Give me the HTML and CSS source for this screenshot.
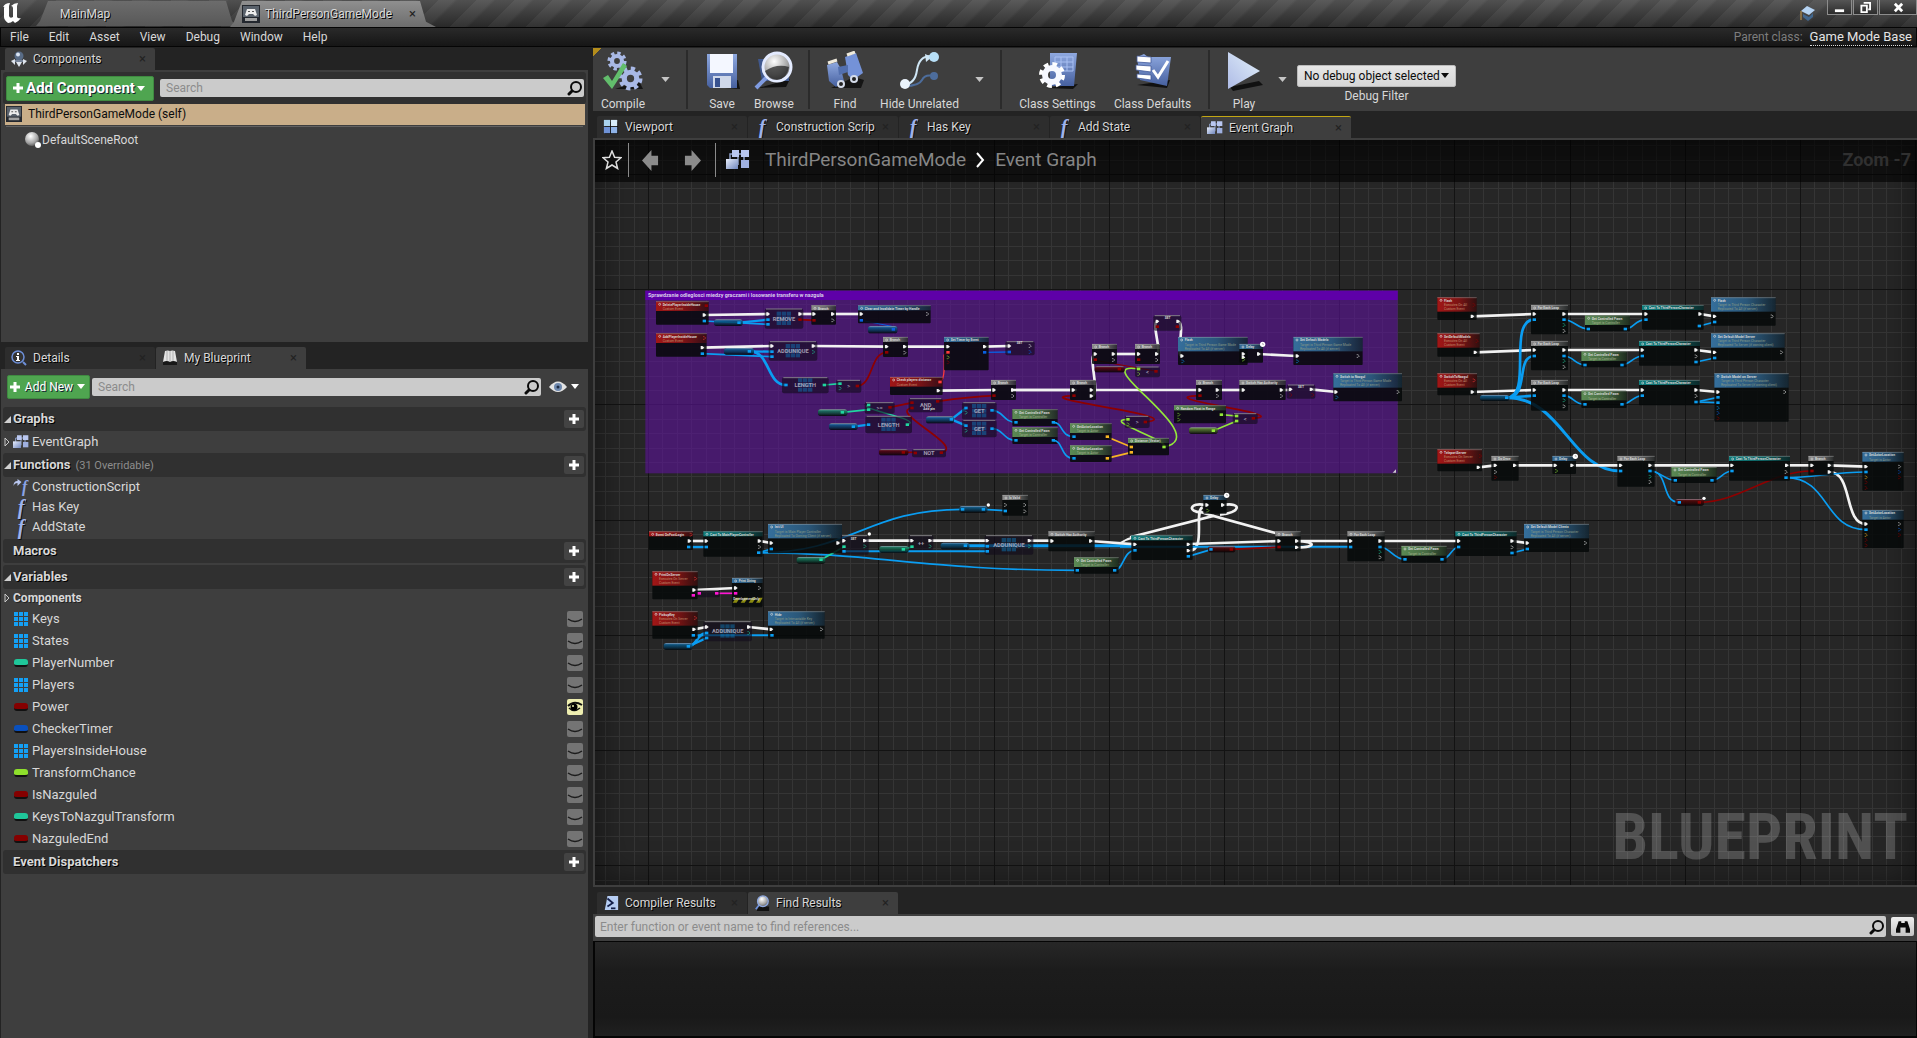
FILE: index.html
```html
<!DOCTYPE html>
<html lang="en">
<head>
<meta charset="utf-8">
<title>ThirdPersonGameMode</title>
<link rel="stylesheet" href="styles.css">
</head>
<body>
<svg class="defs" aria-hidden="true">
  <defs>
    <linearGradient id="ice" x1="0" y1="0" x2="1" y2="1"><stop offset="0" stop-color="#e8eefc"/><stop offset="1" stop-color="#6f86bd"/></linearGradient>
    <linearGradient id="playfill" x1="0" y1="1" x2="1" y2="0"><stop offset="0" stop-color="#aebbe6"/><stop offset="1" stop-color="#e4f2fb"/></linearGradient>
    <linearGradient id="steel" x1="0" y1="0" x2="0" y2="1"><stop offset="0" stop-color="#8fa9e0"/><stop offset="1" stop-color="#46609f"/></linearGradient>
    <radialGradient id="ball" cx=".4" cy=".3" r=".8"><stop offset="0" stop-color="#fff"/><stop offset=".6" stop-color="#a5a5a5"/><stop offset="1" stop-color="#444"/></radialGradient>
    <symbol id="i-search" viewBox="0 0 16 16"><circle cx="9" cy="7" r="5" fill="none" stroke="#0a0a0a" stroke-width="2"/><path d="M5 11L2 14" stroke="#0a0a0a" stroke-width="3" stroke-linecap="round"/></symbol>
    <symbol id="i-plus" viewBox="0 0 12 12"><path d="M4.500 1h3v3.500H11v3H7.500V11h-3V7.500H1v-3h3.500z" fill="#fff"/></symbol>
    <symbol id="i-caret" viewBox="0 0 10 6"><path d="M0 0h10L5 6z" fill="currentColor"/></symbol>
    <symbol id="i-open" viewBox="0 0 8 8"><path d="M8 0v8H0z" fill="#d0d0d0"/></symbol>
    <symbol id="i-closed" viewBox="0 0 6 10"><path d="M1 1l4 4-4 4z" fill="none" stroke="#c8c8c8"/></symbol>
    <symbol id="i-graph" viewBox="0 0 24 20"><path d="M4 13V4h14v11M12 4v11" stroke="#8fa0c8" stroke-width="1.500" fill="none"/><path d="M6 0h7v7H6zM15 0h8v7h-8z" fill="#b9c7f0"/><path d="M0 9h12v10H0z" fill="url(#ice)"/><path d="M15 10h8v8h-8z" fill="#9fb0e0"/></symbol>
    <symbol id="i-view" viewBox="0 0 16 18"><path d="M1 4v13h15V3z" fill="#111"/><path d="M0 1h7v7H0z" fill="#a9d2ee"/><path d="M8 1h7v7H8z" fill="#d8ecfa"/><path d="M0 9h7v7H0z" fill="#6f92d6"/><path d="M8 9h7v7H8z" fill="#8fb3e8"/></symbol>
    <symbol id="i-pad" viewBox="0 0 18 18"><path d="M0 0h18v18H0z" fill="#23272e"/><path d="M1 1h16v11H1z" fill="#59616b"/><path d="M5 4h8l2 6-2 1-2-2H7l-2 2-2-1z" fill="#ececec"/><path d="M3 13h12v3H3z" fill="#a1a1a1"/><path d="M6 6h2v1H6zM10 6h2v1h-2z" fill="#555"/></symbol>
    <symbol id="i-comp" viewBox="0 0 16 16"><circle cx="8" cy="5" r="4.500" fill="#596c86"/><circle cx="7" cy="3.500" r="2" fill="#d9e4f3"/><path d="M0 10l4-2v6zM16 10l-4-2v6zM5 11h6l-3 5z" fill="#dfe5ee"/><path d="M4 9h8v2H4z" fill="#78859a"/></symbol>
    <symbol id="i-ball" viewBox="0 0 16 16"><circle cx="7" cy="7" r="7" fill="url(#ball)"/><circle cx="13" cy="13" r="3" fill="#fff"/></symbol>
    <symbol id="i-info" viewBox="0 0 16 16"><circle cx="7" cy="7" r="6" fill="#333" stroke="#6d8fd8" stroke-width="1.500"/><path d="M12 12l3 3" stroke="#6d8fd8" stroke-width="2"/><path d="M6 3h2v2H6zM5 6h3v4h1v1H5v-1h1V7H5z" fill="#fff"/></symbol>
    <symbol id="i-book" viewBox="0 0 16 16"><path d="M1 11h14v4H1z" fill="#181818"/><path d="M3 1q3-1 5 0 2-1 5 0l2 11q-4-2-7 0-3-2-7 0z" fill="#e4e4e4"/><path d="M8 1v11M5 1v10M11 1v10" stroke="#9b9b9b" stroke-width=".7"/></symbol>
    <symbol id="i-eye" viewBox="0 0 18 12"><path d="M0 6q9-11 18 0-9 10-18 0z" fill="#e3e3e3"/><circle cx="9" cy="6" r="4" fill="#6e88ad"/><circle cx="9" cy="6" r="1.500" fill="#1d2c44"/></symbol>
    <symbol id="i-shut" viewBox="0 0 16 16"><path d="M1 8q7 5 14 0" stroke="#1c1c1c" stroke-width="1.500" fill="none"/></symbol>
    <symbol id="i-look" viewBox="0 0 16 16"><path d="M1 7q6-6 14-1" stroke="#111" stroke-width="2" fill="none"/><path d="M2 9q5 5 11 0" stroke="#111" stroke-width="1.500" fill="none"/><circle cx="7" cy="8" r="3.500" fill="#000"/><circle cx="6" cy="7" r="1" fill="#eeeeb0"/></symbol>
    <symbol id="i-array" viewBox="0 0 14 14"><path d="M0 0h4v4H0zM5 0h4v4H5zM10 0h4v4h-4zM0 5h4v4H0zM5 5h4v4H5zM10 5h4v4h-4zM0 10h4v4H0zM5 10h4v4H5zM10 10h4v4h-4z" fill="#14a0f5"/></symbol>
    <symbol id="i-results" viewBox="0 0 16 18"><path d="M4 1h12v16H1z" fill="#b6cdf3"/><path d="M4 4l6 5-6 4" stroke="#14204a" stroke-width="2" fill="none"/><path d="M8 15h5" stroke="#14204a" stroke-width="2"/></symbol>
    <symbol id="i-lens" viewBox="0 0 16 18"><path d="M4 13h12v5H2z" fill="#111"/><path d="M5 11l-4 5" stroke="#6d8fd8" stroke-width="2"/><circle cx="9" cy="7" r="6" fill="url(#ball)" stroke="#8fa9e0" stroke-width="1.500"/></symbol>
    <symbol id="i-gear" viewBox="0 0 24 24"><circle cx="12" cy="12" r="9.500" fill="none" stroke="#a9b9e6" stroke-width="4" stroke-dasharray="4 3.460"/><circle cx="12" cy="12" r="6" fill="none" stroke="#a9b9e6" stroke-width="5"/></symbol>
  </defs>
</svg>

<header class="titlebar">
  <svg class="logo" viewBox="0 0 20 22"><path d="M1 5Q3 1 8 1L7 4v10q1 3 4 1V6q0-2-2-2 3-3 7-3l-1 3v11q1 2 4 1-3 4-6 5l-2-2q-2 2-5 2-4-3-4-6V6Q3 4 1 5z" fill="#fff"/></svg>
  <nav class="windows">
    <a class="wtab" href="#">MainMap</a>
    <a class="wtab wtab-on" href="#"><svg class="i18"><use href="#i-pad"/></svg><span>ThirdPersonGameMode</span><b class="x">×</b></a>
  </nav>
  <svg class="hat" viewBox="0 0 16 16"><path d="M8 1l8 4-6 5-8-4z" fill="#b5d3f3"/><path d="M4 9l6 3 4-4v4l-5 4-5-4z" fill="#41678f"/><path d="M2 6v9" stroke="#c79a4f"/></svg>
  <div class="winctl">
    <button aria-label="Minimize"><svg viewBox="0 0 12 12"><path d="M1 8h10v3H1z" fill="#fff"/></svg></button>
    <button aria-label="Restore"><svg viewBox="0 0 12 12"><path d="M4 1h7v7H9M1.500 4h6v7h-6z" fill="none" stroke="#fff" stroke-width="2"/></svg></button>
    <button class="wide" aria-label="Close"><svg viewBox="0 0 12 12"><path d="M2 2l8 8M10 2l-8 8" stroke="#fff" stroke-width="3"/></svg></button>
  </div>
</header>

<div class="menubar">
  <nav class="menus"><a href="#">File</a><a href="#">Edit</a><a href="#">Asset</a><a href="#">View</a><a href="#">Debug</a><a href="#">Window</a><a href="#">Help</a></nav>
  <div class="parent"><span>Parent class:</span><a href="#">Game Mode Base</a></div>
</div>

<main class="editor">
  <div class="side">
    <section class="dock dock-components">
      <div class="tabs"><div class="tab on"><svg class="i16"><use href="#i-comp"/></svg><span>Components</span><b class="x">×</b></div></div>
      <div class="panel">
        <div class="addbar">
          <button class="add add-big"><svg class="i12"><use href="#i-plus"/></svg>Add Component<svg class="caret"><use href="#i-caret"/></svg></button>
          <label class="search"><input type="text" placeholder="Search" aria-label="Search components"><svg class="i16"><use href="#i-search"/></svg></label>
        </div>
        <div class="self"><svg class="i16"><use href="#i-pad"/></svg>ThirdPersonGameMode (self)</div>
        <div class="root"><svg class="i16"><use href="#i-ball"/></svg>DefaultSceneRoot</div>
      </div>
    </section>

    <section class="dock dock-blueprint">
      <div class="tabs">
        <div class="tab"><svg class="i16"><use href="#i-info"/></svg><span>Details</span><b class="x">×</b></div>
        <div class="tab on"><svg class="i16"><use href="#i-book"/></svg><span>My Blueprint</span><b class="x">×</b></div>
      </div>
      <div class="panel">
        <div class="newbar">
          <button class="add"><svg class="i12"><use href="#i-plus"/></svg>Add New<svg class="caret"><use href="#i-caret"/></svg></button>
          <label class="search"><input type="text" placeholder="Search" aria-label="Search blueprint"><svg class="i16"><use href="#i-search"/></svg></label>
          <button class="viewopt" aria-label="View options"><svg class="eye"><use href="#i-eye"/></svg><svg class="caret"><use href="#i-caret"/></svg></button>
        </div>

        <h2 class="cat"><svg class="tri"><use href="#i-open"/></svg>Graphs<button aria-label="Add graph"><svg class="i12"><use href="#i-plus"/></svg></button></h2>
        <div class="item graphitem"><svg class="arrow"><use href="#i-closed"/></svg><svg class="i16"><use href="#i-graph"/></svg>EventGraph</div>
        <h2 class="cat"><svg class="tri"><use href="#i-open"/></svg>Functions<small>(31 Overridable)</small><button aria-label="Add function"><svg class="i12"><use href="#i-plus"/></svg></button></h2>
        <div class="item"><span class="ctor"><svg viewBox="0 0 8 8"><path d="M0 7q0-5 4-5V0l4 3-4 4V4Q1 4 0 7z" fill="#b9c7f0"/></svg><i>f</i></span>ConstructionScript</div>
        <div class="item"><i class="fn">f</i>Has Key</div>
        <div class="item"><i class="fn">f</i>AddState</div>
        <h2 class="cat gap-top">Macros<button aria-label="Add macro"><svg class="i12"><use href="#i-plus"/></svg></button></h2>
        <h2 class="cat gap-top"><svg class="tri"><use href="#i-open"/></svg>Variables<button aria-label="Add variable"><svg class="i12"><use href="#i-plus"/></svg></button></h2>
        <h3 class="sub"><svg class="arrow"><use href="#i-closed"/></svg>Components</h3>
        <ul class="vars">
          <li><svg class="i14"><use href="#i-array"/></svg><span>Keys</span><button aria-label="Keys visibility"><svg class="i16"><use href="#i-shut"/></svg></button></li>
          <li><svg class="i14"><use href="#i-array"/></svg><span>States</span><button aria-label="States visibility"><svg class="i16"><use href="#i-shut"/></svg></button></li>
          <li><b class="pill teal"></b><span>PlayerNumber</span><button aria-label="PlayerNumber visibility"><svg class="i16"><use href="#i-shut"/></svg></button></li>
          <li><svg class="i14"><use href="#i-array"/></svg><span>Players</span><button aria-label="Players visibility"><svg class="i16"><use href="#i-shut"/></svg></button></li>
          <li><b class="pill red"></b><span>Power</span><button class="lit" aria-label="Power visibility"><svg class="i16"><use href="#i-look"/></svg></button></li>
          <li><b class="pill blue"></b><span>CheckerTimer</span><button aria-label="CheckerTimer visibility"><svg class="i16"><use href="#i-shut"/></svg></button></li>
          <li><svg class="i14"><use href="#i-array"/></svg><span>PlayersInsideHouse</span><button aria-label="PlayersInsideHouse visibility"><svg class="i16"><use href="#i-shut"/></svg></button></li>
          <li><b class="pill lime"></b><span>TransformChance</span><button aria-label="TransformChance visibility"><svg class="i16"><use href="#i-shut"/></svg></button></li>
          <li><b class="pill red"></b><span>IsNazguled</span><button aria-label="IsNazguled visibility"><svg class="i16"><use href="#i-shut"/></svg></button></li>
          <li><b class="pill teal"></b><span>KeysToNazgulTransform</span><button aria-label="KeysToNazgulTransform visibility"><svg class="i16"><use href="#i-shut"/></svg></button></li>
          <li><b class="pill red"></b><span>NazguledEnd</span><button aria-label="NazguledEnd visibility"><svg class="i16"><use href="#i-shut"/></svg></button></li>
        </ul>
        <h2 class="cat">Event Dispatchers<button aria-label="Add event dispatcher"><svg class="i12"><use href="#i-plus"/></svg></button></h2>
      </div>
    </section>
  </div>

  <div class="work">
    <div class="toolbar">
      <button class="tool t-compile"><svg viewBox="0 0 40 40"><path d="M12 38h28l-4-8z" fill="#151515"/><use href="#i-gear" x="4" y="0" width="20" height="20"/><use href="#i-gear" x="15" y="15" width="25" height="25"/><path d="M0 27l5-3 4 6L20 12l4 3L9 38z" fill="#62bd6c"/></svg><span>Compile</span></button>
      <button class="drop" aria-label="Compile options"><svg class="caret"><use href="#i-caret"/></svg></button>
      <i class="sep"></i>
      <button class="tool"><svg viewBox="0 0 40 40"><path d="M8 36l30 2-2-9z" fill="#111"/><path d="M5 3h30v34H8l-3-3z" fill="url(#steel)"/><path d="M8 3h23v19H8z" fill="#f4f7ff"/><path d="M11 25h18v12H11z" fill="#cfd8ea"/><path d="M13 27h5v9h-5z" fill="#38528f"/></svg><span>Save</span></button>
      <button class="tool"><svg viewBox="0 0 40 40"><path d="M4 37l28-1 4-8z" fill="#111"/><path d="M4 8h31v22H8z" fill="#40588d"/><path d="M13 26L2 37" stroke="#7f9be0" stroke-width="4"/><circle cx="23" cy="16" r="14" fill="url(#ball)" stroke="#e4ebff" stroke-width="3"/><path d="M11 20q12-8 24-4-2 12-12 13-9 0-12-9z" fill="#1d1d1d" opacity=".7"/></svg><span>Browse</span></button>
      <i class="sep"></i>
      <button class="tool t-find"><svg viewBox="0 0 40 40"><path d="M6 37h30l3-8-10-3z" fill="#151515"/><path d="M2 14l10-3 4 7 3 12-8 6-7-6z" fill="url(#steel)"/><path d="M20 6l11-4 7 20-10 7-5-5z" fill="#7492d8"/><path d="M13 16l10-2v7l-9 3z" fill="#526fae"/><circle cx="16" cy="33" r="4" fill="#d4dbe9"/><circle cx="29" cy="28" r="4" fill="#d4dbe9"/><circle cx="16" cy="33" r="2" fill="#222"/><circle cx="29" cy="28" r="2" fill="#222"/><path d="M3 12l9-3M22 4l8-3" stroke="#efeadc" stroke-width="3"/></svg><span>Find</span></button>
      <button class="tool t-wide"><svg viewBox="0 0 40 40"><path d="M5 33q10 0 12-14t14-14" stroke="#cfe6f5" stroke-width="2" fill="none"/><path d="M5 35q14 0 17-6t11-4" stroke="#4d6d9c" stroke-width="2" fill="none"/><path d="M25 3l7 3-6 5z" fill="#cfe6f5"/><circle cx="34" cy="6" r="5" fill="#b8e0f8"/><circle cx="34" cy="25" r="4" fill="#4d6d9c"/><circle cx="5" cy="33" r="5" fill="#eaf3fb"/></svg><span>Hide Unrelated</span></button>
      <button class="drop" aria-label="Hide options"><svg class="caret"><use href="#i-caret"/></svg></button>
      <i class="sep"></i>
      <button class="tool t-wide"><svg viewBox="0 0 40 40"><path d="M8 37l27 1 5-5z" fill="#111"/><path d="M12 2h27l-3 33H12z" fill="url(#steel)"/><path d="M17 6h18v14H17zM17 11h18M17 16h18M23 6v14M29 6v14" stroke="#a9c0f2" fill="none"/><circle cx="14" cy="24" r="10.500" fill="none" stroke="#fff" stroke-width="5" stroke-dasharray="4.500 3.750"/><circle cx="14" cy="24" r="7" fill="none" stroke="#f6f8ff" stroke-width="6"/></svg><span>Class Settings</span></button>
      <button class="tool t-wide"><svg viewBox="0 0 40 40"><path d="M4 34l30 3 3-8z" fill="#111"/><path d="M4 6l7-3 4 3h23l-4 29-27-6z" fill="url(#steel)"/><path d="M4 5l14 1v6L4 11zM3 14l15 1v6L3 19zM4 23l14 1v5L4 27z" fill="#fff" stroke="#41599b" stroke-width=".8"/><path d="M20 19l5 7L35 10" stroke="#fff" stroke-width="3" fill="none"/></svg><span>Class Defaults</span></button>
      <i class="sep"></i>
      <button class="tool"><svg viewBox="0 0 40 40"><path d="M6 36l29-6 4 4-30 6z" fill="#111"/><path d="M4 1l32 19L4 38z" fill="url(#playfill)"/></svg><span>Play</span></button>
      <button class="drop" aria-label="Play options"><svg class="caret"><use href="#i-caret"/></svg></button>
      <div class="debug">
        <div class="combo"><select id="dbg"><option>No debug object selected</option></select><svg class="caret"><use href="#i-caret"/></svg></div>
        <label for="dbg">Debug Filter</label>
      </div>
    </div>

    <div class="tabs">
      <div class="tab"><svg class="i16"><use href="#i-view"/></svg><span>Viewport</span><b class="x">×</b></div>
      <div class="tab"><i class="fn">f</i><span>Construction Scrip</span><b class="x">×</b></div>
      <div class="tab"><i class="fn">f</i><span>Has Key</span><b class="x">×</b></div>
      <div class="tab"><i class="fn">f</i><span>Add State</span><b class="x">×</b></div>
      <div class="tab on current"><svg class="i16"><use href="#i-graph"/></svg><span>Event Graph</span><b class="x">×</b></div>
    </div>

    <section class="graph">
      <svg id="canvas" class="canvas"></svg>
      <div class="crumbs">
        <button class="star" aria-label="Bookmark"><svg viewBox="0 0 20 20"><path d="M10 1l2.600 6.200 6.400.5-5 4.300 1.600 6.500L10 15l-5.600 3.500L6 12 1 7.700l6.400-.5z" fill="none" stroke="#e0e0e0" stroke-width="1.500"/></svg></button>
        <button class="hist" aria-label="Back"><svg viewBox="0 0 18 24"><path d="M0 12L10 1v6h7v10h-7v6z" fill="#8b8b8b"/></svg></button>
        <button class="hist" aria-label="Forward"><svg viewBox="0 0 18 24"><path d="M18 12L8 1v6H1v10h7v6z" fill="#8b8b8b"/></svg></button>
        <i class="bar"></i>
        <svg class="bigicon"><use href="#i-graph"/></svg>
        <a href="#">ThirdPersonGameMode</a>
        <svg class="chev" viewBox="0 0 9 16"><path d="M1 1l6 7-6 7" stroke="#fff" stroke-width="2" fill="none"/></svg>
        <a href="#">Event Graph</a>
        <strong>Zoom -7</strong>
      </div>
      <div class="watermark">BLUEPRINT</div>
    </section>

    <section class="results">
      <div class="tabs">
        <div class="tab"><svg class="i16"><use href="#i-results"/></svg><span>Compiler Results</span><b class="x">×</b></div>
        <div class="tab on"><svg class="i16"><use href="#i-lens"/></svg><span>Find Results</span><b class="x">×</b></div>
      </div>
      <div class="find">
        <label class="search tall"><input type="text" placeholder="Enter function or event name to find references..." aria-label="Find references"><svg class="i16"><use href="#i-search"/></svg></label>
        <button class="binoc" aria-label="Find in all blueprints"><svg viewBox="0 0 16 14"><path d="M3 1h3v2h4V1h3l3 9v4h-5V8H5v6H0v-4z" fill="#0a0a0a"/></svg></button>
      </div>
      <div class="list"></div>
    </section>
  </div>
</main>
<script src="graph.js"></script>
</body>
</html>
```
FILE: styles.css
```css
* { box-sizing: border-box; }
html, body { height: 100%; }
body {
  margin: 0;
  display: flex;
  flex-direction: column;
  background: #232323;
  color: #d8d8d8;
  font: 12px/16px Roboto, "Liberation Sans", sans-serif;
  overflow: hidden;
}
button, input, select { font: inherit; color: inherit; border: 0; margin: 0; padding: 0; background: none; }
a { color: inherit; text-decoration: none; }
svg { display: block; flex: none; }
h2, h3, ul { margin: 0; padding: 0; font-size: 13px; }
.defs { position: absolute; width: 0; height: 0; }
.i12 { width: 12px; height: 12px; }
.i14 { width: 14px; height: 14px; }
.i16 { width: 16px; height: 16px; }
.i18 { width: 18px; height: 18px; }
.caret { width: 8px; height: 5px; }
.x { color: #222; font-weight: 400; font-size: 13px; text-shadow: none; margin-left: auto; }

/* window frame */
.titlebar {
  height: 27px;
  flex: none;
  display: flex;
  align-items: flex-start;
  background:
    linear-gradient(rgba(255, 255, 255, .14), rgba(0, 0, 0, .2)),
    repeating-linear-gradient(135deg, #333 0 13px, #3f3f3f 13px 16px, #3f3f3f 24px, #333 27px);
}
.logo { width: 20px; height: 22px; margin: 2px 0 0 2px; }
.windows { display: flex; height: 27px; padding-left: 14px; }
.wtab {
  width: 200px;
  height: 25px;
  margin: 1px -6px 0 0;
  padding-left: 24px;
  display: flex;
  align-items: center;
  background: linear-gradient(#6c6c6c, #585858);
  clip-path: polygon(0 100%, 4px 80%, 12px 0, 190px 0, 196px 80%, 100% 100%);
  text-shadow: 1px 1px 0 #000;
}
.wtab-on { width: 206px; height: 26px; padding: 0 20px 0 12px; gap: 5px; background: linear-gradient(#8f8f8f, #6d6d6d); }
.hat { width: 16px; height: 16px; margin: 5px 12px 0 auto; }
.winctl { display: flex; gap: 1px; }
.winctl button { width: 25px; height: 15px; display: grid; place-items: center; border: 1px solid #8d8d8d; border-top: 0; background: linear-gradient(#555, #2c2c2c); }
.winctl .wide { width: 38px; }
.winctl svg { width: 11px; height: 11px; }
.menubar {
  height: 20px;
  flex: none;
  display: flex;
  align-items: center;
  justify-content: space-between;
  border: 1px solid #050505;
  background: linear-gradient(#2a2a2a, #161616);
}
.menus { display: flex; gap: 20px; padding-left: 9px; }
.parent { display: flex; gap: 7px; padding-right: 4px; color: #7d7d7d; }
.parent a { color: #e4e4e4; font-size: 13px; border-bottom: 1px dotted #ddd; }

.editor { flex: 1; min-height: 0; display: grid; grid-template-columns: 588fr 1324fr; column-gap: 5px; padding-top: 1px; }
.side, .work, .dock { display: flex; flex-direction: column; min-width: 0; min-height: 0; }

/* docked tabs */
.tabs { display: flex; gap: 1px; height: 22px; flex: none; padding-left: 4px; }
.tab { width: 150px; padding: 0 9px 0 6px; display: flex; align-items: center; gap: 6px; background: #2d2d2d; border-radius: 2px 2px 0 0; text-shadow: 1px 1px 0 #000; white-space: nowrap; }
.tab.on { background: #3e3e3e; }
.tab.current { border-top: 1px solid #c2a614; }
.dock-components { flex: 294 0 0; }
.dock-blueprint { flex: 691 0 0; margin-top: 5px; }
.dock { padding-left: 1px; }
.panel { flex: 1; min-height: 0; background: #3e3e3e; padding: 2px; }

.search { flex: 1; min-width: 0; height: 18px; display: flex; align-items: center; padding: 0 1px 0 6px; background: #cbcbcb; border-radius: 2px; }
.search input { flex: 1; min-width: 0; color: #222; outline: 0; }
.search input::placeholder { color: #8b8b8b; opacity: 1; }
.search.tall { height: 21px; padding-left: 5px; }
.add { display: flex; align-items: center; justify-content: center; gap: 4px; height: 24px; width: 83px; padding-right: 3px; background: #4fa550; border: 1px solid #3f8a41; border-radius: 2px; color: #fff; text-shadow: 1px 1px 0 #123; }
.add-big { width: 148px; height: 25px; gap: 2px; font-size: 15px; font-weight: 700; }
.addbar { display: flex; align-items: center; gap: 6px; height: 32px; padding: 0 2px 0 3px; background: #303030; border-radius: 3px; }
.self { display: flex; align-items: center; gap: 6px; height: 21px; margin: 0 1px 0 2px; padding: 0 0 2px 1px; background: #c9ae89; color: #0c0c0c; }
.root { display: flex; align-items: center; gap: 1px; height: 26px; margin: 1px 3px; padding-left: 19px; border-top: 1px solid #626262; }

.newbar { display: flex; align-items: center; gap: 2px; height: 36px; padding: 0 7px 5px 4px; }
.viewopt { display: flex; align-items: center; gap: 4px; padding: 0 0 0 6px; color: #fff; }
.eye { width: 18px; height: 12px; }
.cat { display: flex; align-items: center; height: 24px; padding: 0 2px 0 10px; background: #303030; border-radius: 3px; text-shadow: 1px 1px 0 #000; }
.tri { width: 7px; height: 7px; margin: 0 2px 0 -9px; }
.cat small { margin: 1px 0 0 5px; font-size: 11px; font-weight: 400; color: #8d8d8d; text-shadow: none; }
.cat button { width: 20px; height: 18px; margin-left: auto; display: grid; place-items: center; background: #434343; border-radius: 2px; }
.gap-top { margin-top: 2px; }
.item { display: flex; align-items: center; gap: 3px; height: 20px; padding-left: 10px; font-size: 13px; }
.graphitem { height: 22px; }
.arrow { width: 6px; height: 10px; }
.graphitem .arrow { margin: 0 0 0 -9px; }
.fn { width: 16px; font: italic 700 20px/16px "Liberation Serif", serif; color: #9db2ec; text-align: center; text-shadow: 1px 1px 0 #111; }
.ctor { display: flex; width: 16px; }
.ctor svg { width: 9px; height: 8px; }
.ctor i { font: italic 700 16px/16px "Liberation Serif", serif; color: #8aa3e6; }
.sub { display: flex; align-items: center; gap: 3px; height: 18px; padding-left: 1px; margin-bottom: 1px; font-size: 12px; text-shadow: 1px 1px 0 #222; }
.vars { list-style: none; }
.vars li { display: flex; align-items: center; gap: 4px; height: 22px; padding: 0 3px 0 11px; }
.vars button { width: 16px; height: 16px; margin-left: auto; background: #747474; border-radius: 2px; }
.vars .lit { background: #eeeeb0; }
.pill { width: 14px; height: 8px; border-radius: 3px; border-bottom: 2px solid #111; }
.teal { background: #1fc79a; }
.red { background: #850000; }
.blue { background: #0a50bd; }
.lime { background: #8fe02c; }

/* toolbar */
.toolbar { display: flex; height: 63px; flex: none; margin-bottom: 5px; background: linear-gradient(135deg, #b48d1c 0 6px, transparent 6px), #3e3e3e; text-shadow: 1px 1px 0 #000; }
.tool { width: 52px; padding-top: 3px; display: flex; flex-direction: column; align-items: center; gap: 4px; white-space: nowrap; }
.tool svg { width: 40px; height: 40px; }
.tool span { line-height: 18px; }
.t-compile { width: 60px; }
.t-find { width: 54px; }
.t-wide { width: 95px; }
.drop { width: 25px; display: grid; place-items: center; color: #c5c5c5; }
.tool .caret, .drop .caret { width: 9px; height: 5px; }
.sep { width: 2px; margin: 2px 8px; background: #2b2b2b; }
.debug { display: flex; flex-direction: column; align-items: center; gap: 1px; margin: 17px 0 0 2px; text-shadow: none; }
.combo { position: relative; color: #0b0b0b; }
.combo select { appearance: none; width: 159px; height: 22px; padding-left: 6px; border: 1px solid #bbb; border-radius: 2px; background: linear-gradient(#e6e6e6, #d6d6d6); }
.combo .caret { position: absolute; right: 7px; top: 8px; }

/* graph */
.graph { flex: 1; min-height: 0; position: relative; border: 2px solid #3e3e3e; border-right: 0; background: #262626; overflow: hidden; }
.canvas { position: absolute; inset: 0; width: 100%; height: 100%; }
.graph::after { content: ""; position: absolute; inset: 0; pointer-events: none; box-shadow: inset 0 0 36px rgba(0, 0, 0, .55); }
.crumbs { position: relative; z-index: 1; display: flex; align-items: center; height: 42px; padding: 0 6px 2px 7px; background: rgba(0, 0, 0, .58); font-size: 19px; line-height: 24px; color: #868686; }
.star { width: 27px; height: 34px; border-right: 1px solid #8a8a8a; }
.star svg { width: 20px; height: 20px; }
.hist { width: 42px; display: grid; place-items: center; }
.hist svg { width: 17px; height: 23px; }
.bar { width: 1px; height: 34px; margin-left: 2px; background: #8a8a8a; }
.bigicon { width: 24px; height: 20px; margin: 0 15px 0 10px; }
.chev { width: 9px; height: 16px; margin: 0 10px; }
.crumbs strong { margin-left: auto; font-size: 18px; color: #303030; }
.watermark { position: absolute; right: 9px; bottom: 9px; font: 700 64px/76px "Roboto Condensed", Roboto, sans-serif; color: rgba(255, 255, 255, .2); }

.wire { fill: none; }
.node-title { font: 700 10px Roboto, sans-serif; fill: #d6d6d6; }
.node-sub { font: 10px Roboto, sans-serif; }
.node-op { font: 700 17px Roboto, sans-serif; fill: #b9b4c4; text-anchor: middle; opacity: .85; }
.note-title { font: 700 16px Roboto, sans-serif; fill: #d9cdea; }

/* find results */
.results { flex: none; padding-top: 5px; }
.find { display: flex; align-items: center; gap: 5px; height: 27px; padding: 2px 3px 4px 2px; background: #3e3e3e; }
.binoc { width: 23px; height: 19px; display: grid; place-items: center; background: linear-gradient(#eee, #c4c4c4); border-radius: 2px; }
.binoc svg { width: 14px; height: 13px; }
.list { height: 97px; border: 1px solid #050505; border-left-width: 2px; border-bottom-width: 2px; background: linear-gradient(#272727, #1c1c1c 30%, #191919 80%, #202020); }

.vars span { font-size: 13px; }
```
FILE: graph.js
```js
// Builds the event graph: grid, comment box, wires, nodes and pins.
// Node coordinates are in graph units; the view is zoomed out to a third.
const svg = document.getElementById('canvas');
const COL = { w: '#f2f2f2', b: '#0a9df2', r: '#8e0000', R: '#ff3b3b', g: '#20d6a0', l: '#93e83a', o: '#f7b524', p: '#0a5fe0', m: '#ff14d2' };
const HEAD = { event: ['#a11616', '#c08a6a'], func: ['#356f9c', '#8a9a86'], pure: ['#5b8a54', '#a5b58c'], cast: ['#0f7d7d', '#9ab'], flow: ['#8a8a8a', '#aaa'] };
let out = '<defs>';
for (const k in HEAD) out += `<linearGradient id="h-${k}"><stop offset="0" stop-color="${HEAD[k][0]}"/><stop offset=".55" stop-color="${HEAD[k][0]}" stop-opacity=".75"/><stop offset="1" stop-color="${HEAD[k][0]}" stop-opacity=".25"/></linearGradient>`;
for (const k of ['b', 'r', 'g', 'l']) out += `<linearGradient id="v-${k}" x2="0" y2="1"><stop offset="0" stop-color="#99a"/><stop offset=".25" stop-color="${COL[k]}" stop-opacity=".45"/><stop offset="1" stop-color="#000" stop-opacity=".6"/></linearGradient>`;
out += '</defs>';

const cell = 14.4;
let thin = '', heavy = '';
for (let i = -8; i < 240; i++) {
  const x = Math.round(53 + i * cell), y = Math.round(34 + i * cell);
  const seg = `M${x} 0h1v2000h-1zM0 ${y}h4000v1H0z`;
  if (i % 8) thin += seg; else heavy += seg;
}
out += `<path d="${thin}" fill="#353535"/><path d="${heavy}" fill="#131313"/>`;

function node([kind, x, y, w, h, title, ...subs]) {
  const box = (f, o, r) => `<rect x="${x}" y="${y}" width="${w}" height="${h}" rx="${r}" fill="${f}" fill-opacity="${o}"/>`;
  if (kind === 'var') return box('#08080c', .7, 8) + box(`url(#v-${title})`, 1, 8);
  if (kind === 'op' || kind === 'arr') {
    let s = box('#120c1c', .62, 6) + `<path d="M${x + 4} ${y + 1}h${w - 8}" stroke="#aaa" stroke-opacity=".7" stroke-width="3"/>`;
    if (kind === 'arr') for (let i = 0; i < 9; i++) s += `<rect x="${x + w / 2 - 22 + (i % 3) * 15}" y="${y + h / 2 - 21 + Math.floor(i / 3) * 14}" width="13" height="12" fill="#0a7fc0" opacity=".45"/>`;
    return s + `<text class="node-op" x="${x + w / 2}" y="${y + h / 2 + 6}">${title}</text>`;
  }
  const hh = 15 + subs.length * 14;
  let s = box('#060909', .86, 3) + `<rect x="${x}" y="${y}" width="${w}" height="${hh}" fill="url(#h-${kind})"/>`;
  s += `<path d="M${x} ${y + 1}h${w}" stroke="#c0c0c0" stroke-opacity=".6" stroke-width="2"/>`;
  s += `<circle cx="${x + 11}" cy="${y + 9}" r="3" fill="none" stroke="#ddd" stroke-width="2"/><text class="node-title" x="${x + 20}" y="${y + 13}">${title}</text>`;
  subs.forEach((t, i) => { s += `<text class="node-sub" x="${x + 20}" y="${y + 27 + i * 12}" fill="${HEAD[kind][1]}">${t}</text>`; });
  return s;
}

// pin token: x,y,colour - a trailing "o" marks an unconnected pin
function pins(str) {
  return str.trim().split(/\s+/).map(t => {
    const [x, y, c, e] = t.split(',');
    const fill = e ? 'none' : COL[c], st = e ? `stroke="${COL[c]}" stroke-width="2"` : '';
    if (e) return `<path d="M${x - 4} ${y - 4}h4l4 4-4 4h-4" fill="none" ${st} stroke-opacity=".8"/>`;
    return c === 'w' ? `<path d="M${x - 5} ${y - 5}h5l6 5-6 5h-5z" fill="${fill}"/>` : `<rect x="${x - 5}" y="${y - 4}" width="10" height="8" fill="${fill}"/>`;
  }).join('');
}
function wires(list) {
  return list.map(([c, d, sw]) => `<path class="wire" d="M${d}" stroke="${COL[c]}" stroke-width="${sw || (c === 'w' ? 8 : 5)}"/>`).join('');
}
function scene(x, y, links, nodes, pinText, extra) {
  out += `<g transform="translate(${x} ${y}) scale(.33333)">${wires(links)}${nodes.map(node).join('')}${pins(pinText)}${extra || ''}</g>`;
}
const clock = (x, y) => `<circle cx="${x}" cy="${y}" r="8" fill="#fff"/><path d="M${x} ${y - 4}v4h4" stroke="#333" fill="none"/>`;

out += `<g transform="translate(45 140) scale(.33333)"><rect x="16" y="32" width="2257" height="548" fill="#5b1495" fill-opacity=".64"/><rect x="16" y="32" width="2257" height="28" fill="#5e00a8"/><text class="note-title" x="24" y="51">Sprawdzanie odleglosci miedzy graczami i losowanie transferu w nazgula</text><path d="M2258 578l10-10v10z" fill="#ccc"/></g>`;

// comment box, left part
scene(45, 140, [
  ['w', '193 105L384 102'], ['b', '193 123L384 133'], ['b', '297 128L384 119', 7], ['w', '480 102H522'], ['r', '480 119L522 121'], ['w', '578 102H664'], ['p', '664 121L760 140', 3],
  ['w', '187 203L394 198'], ['b', '187 221L394 230'], ['b', '328 214L394 215', 7], ['b', '330 214C390 214 380 315 438 315', 8], ['w', '520 198L740 200'], ['r', '650 318C700 318 690 217 740 217'],
  ['g', '553 315L600 311'], ['w', '792 200H924'], ['w', '1032 200L1108 198'], ['p', '1032 217L1108 216', 4], ['R', '900 306Q916 300 912 225L924 217', 4],
  ['w', '895 332L1062 330'], ['w', '1116 330H1310'], ['r', '893 364Q990 350 1062 347'], ['g', '607 397L686 389'], ['g', '800 434C860 420 640 385 686 375', 4], ['b', '640 440L686 434', 7],
  ['r', '750 382L816 368'], ['r', '904 518C980 500 740 395 816 384'], ['r', '790 517H826'], ['b', '934 418L978 384', 7], ['b', '934 418L978 437', 7], ['b', '1056 391C1090 391 1090 427 1128 427'], ['b', '1056 446C1090 446 1090 481 1128 481']
], [
  ['event', 48, 64, 158, 70, 'DeletePlayerInsideHouse', 'Custom Event'], ['var', 222, 118, 86, 20, 'b'], ['arr', 374, 86, 116, 60, 'REMOVE'], ['flow', 514, 76, 74, 58, 'Branch'],
  ['func', 654, 76, 218, 54, 'Clear and Invalidate Timer by Handle'], ['var', 684, 138, 88, 22, 'b'], ['event', 48, 160, 152, 70, 'AddPlayerInsideHouse', 'Custom Event'], ['var', 252, 204, 90, 20, 'b'],
  ['arr', 386, 184, 146, 58, 'ADDUNIQUE'], ['flow', 729, 171, 75, 60, 'Branch'], ['func', 912, 171, 134, 100, 'Set Timer by Event'], ['op', 1096, 184, 88, 42, ''], ['arr', 426, 292, 140, 48, 'LENGTH'], ['op', 588, 300, 76, 38, '&gt;'],
  ['event', 750, 291, 158, 54, 'Check players distance', 'Custom Event'], ['flow', 1053, 300, 75, 60, 'Branch'], ['op', 674, 367, 90, 34, '&gt;='], ['op', 806, 355, 102, 42, 'AND'], ['var', 534, 388, 88, 20, 'g'], ['var', 567, 430, 86, 20, 'b'],
  ['arr', 676, 408, 140, 52, 'LENGTH'], ['var', 858, 409, 84, 21, 'b'], ['arr', 966, 367, 104, 52, 'GET'], ['arr', 966, 420, 104, 52, 'GET'], ['pure', 1117, 388, 136, 50, 'Get Controlled Pawn', 'Target is Controller'], ['pure', 1117, 442, 136, 50, 'Get Controlled Pawn', 'Target is Controller'],
  ['var', 717, 508, 88, 18, 'r'], ['op', 816, 508, 102, 24, 'NOT']
], `193,105,w 193,123,b 199,77,r 297,128,b 384,102,w 384,119,b 384,133,b 480,102,w 480,119,r 522,102,w 522,121,r 578,102,w 578,121,w,o 664,102,w 664,121,p 862,102,w,o 760,148,p
 187,203,w 187,221,b 193,174,R,o 328,214,b 396,198,w 396,215,b 396,230,b 520,198,w 520,216,g,o 740,200,w 740,217,r 794,200,w 794,218,w,o 924,200,w 924,217,R 924,232,l,o 924,247,r,o 1034,200,w 1034,217,p 1108,198,w 1108,216,p 1170,198,w,o 1170,216,p,o
 438,315,b 553,315,g 600,311,g 600,325,g,o 652,318,r 900,306,R 895,332,w 1062,330,w 1062,347,r 1118,330,w 1118,348,w,o 607,397,g 686,375,g 686,389,g 750,382,r 816,368,r 816,384,r 893,364,r 640,440,b 686,434,b 802,434,g
 934,418,b 978,384,b 978,398,g,o 978,437,b 978,452,g,o 1056,391,b 1056,446,b 1128,427,b 1128,481,b 790,517,r 826,519,r 904,518,r`, '<text class="node-title" x="1130" y="193">SET</text><text class="node-title" x="850" y="389">Add pin</text>');

// comment box, right part
scene(435, 140, [
  ['w', '-54 330H130'], ['w', '184 330H510'], ['w', '184 348C215 348 170 222 196 222'], ['w', '248 222H326'], ['w', '378 222C400 222 360 124 384 124'], ['w', '442 124C470 124 434 228 456 228'], ['w', '684 222L800 228'], ['r', '344 426C500 410 -40 352 132 347'], ['r', '380 274L190 240', 3],
  ['l', '402 501C560 470 160 240 326 267'], ['l', '402 501C420 480 210 420 294 418'], ['o', '230 470L304 501'], ['o', '230 535L304 517'], ['b', '70 427C100 427 90 470 132 470'], ['b', '70 481C100 481 90 535 132 535'],
  ['w', '562 330H640'], ['w', '752 330H782'], ['w', '842 328L920 336'], ['r', '670 415C800 405 340 352 510 347'], ['l', '574 404L620 408'], ['l', '550 452L620 423']
], [
  ['flow', 186, 192, 75, 60, 'Branch'], ['flow', 315, 192, 75, 60, 'Branch'], ['op', 370, 106, 84, 46, ''], ['func', 444, 171, 209, 84, 'Flash', 'Target is Third Person Game Mode', 'Replicated To All (if server)'], ['func', 628, 192, 71, 56, 'Delay'],
  ['func', 790, 171, 208, 84, 'Set Default Models', 'Target is Third Person Game Mode', 'Replicated To All (if server)'], ['var', 194, 259, 90, 18, 'r'], ['op', 315, 260, 75, 32, '&lt;'], ['flow', 120, 300, 78, 60, 'Branch'], ['flow', 498, 300, 78, 60, 'Branch'],
  ['flow', 628, 300, 139, 60, 'Switch Has Authority'], ['op', 770, 314, 86, 42, ''], ['func', 910, 280, 206, 84, 'Switch to Nazgul', 'Target is Third Person Game Mode', 'Replicated To All (if server)'],
  ['pure', 120, 430, 125, 50, 'GetActorLocation', 'Target is Actor'], ['pure', 120, 496, 125, 50, 'GetActorLocation', 'Target is Actor'], ['op', 284, 408, 75, 36, '&gt;'], ['pure', 294, 474, 123, 52, 'Distance (Vector)'],
  ['pure', 432, 376, 156, 54, 'Random Float in Range'], ['op', 608, 400, 75, 32, '&lt;'], ['var', 477, 442, 86, 20, 'l']
], `130,330,w 132,347,r 184,330,w 184,348,w 196,222,w 196,239,r 250,222,w 250,240,w,o 268,267,r 326,222,w 326,239,r 380,222,w 380,240,w,o 326,267,l 326,282,l,o 378,274,r 382,124,w 444,124,w 382,140,r 442,140,r
 456,228,w 458,244,b,o 640,222,w 640,232,w 640,239,l,o 686,222,w 802,228,w 802,244,b,o 984,228,w,o 510,330,w 510,347,r 562,330,w 562,348,w,o 640,330,w 754,330,w 754,348,w,o 782,328,w 844,328,w 782,345,r,o 848,345,r,o 918,336,w 920,352,b,o 1104,336,w,o
 70,427,b 70,481,b 132,470,b 132,535,b 232,470,o 232,535,o 294,418,l 294,433,l,o 346,426,r 304,501,o 304,517,o 402,501,l 446,404,l,o 446,419,l,o 574,404,l 620,408,l 620,423,l 670,415,r 550,452,l`,
 clock(698, 193) + '<text class="node-title" x="404" y="118">SET</text><text class="node-title" x="804" y="325">SET</text>');

// replicated custom events, right column
const third = 'Target is Third Person Character';
scene(825, 140, [
  ['w', '157 109L343 102'], ['w', '166 217L343 210'], ['w', '157 336L343 330'], ['w', '432 102H678'], ['w', '432 210H667'], ['w', '432 330H667'], ['w', '840 102L884 109'], ['w', '828 210L884 217'], ['w', '828 330L894 336'],
  ['b', '260 353C340 353 260 119 343 119', 8], ['b', '260 353C330 353 285 228 343 228', 8], ['b', '260 353L343 347', 8], ['b', '260 353C430 353 450 573 602 573', 9],
  ['b', '432 119C460 119 475 147 505 147'], ['b', '616 147C640 147 645 119 678 119'], ['b', '838 138L884 126'], ['b', '432 228C460 228 465 255 495 255'], ['b', '606 255C630 255 640 228 667 228'], ['b', '828 246L884 234'], ['b', '432 347C460 347 460 373 495 373'], ['b', '606 373C630 373 640 347 667 347'], ['b', '828 366L894 352'], ['b', '828 366L894 368'],
  ['w', '175 562L226 556'], ['w', '284 556H406'], ['w', '456 556H602'], ['w', '690 556H936'], ['w', '1100 556H1176'], ['w', '1228 556L1338 560'], ['w', '1228 576C1300 576 1270 732 1338 732'],
  ['b', '690 573C720 573 735 601 766 601'], ['b', '690 573C750 573 720 667 778 667'], ['b', '876 601C900 601 910 573 936 573'], ['b', '1098 593C1180 593 1240 576 1338 576'], ['b', '1098 593C1230 593 1210 749 1338 749'], ['r', '838 667C960 667 1050 573 1176 573']
], [
  ['event', 52, 52, 118, 68, 'Flash', 'Executes On All', 'Custom Event'], ['flow', 333, 75, 111, 88, 'For Each Loop'], ['pure', 495, 106, 135, 48, 'Get Controlled Pawn', 'Target is Controller'], ['cast', 666, 75, 185, 74, 'Cast To ThirdPersonCharacter'], ['func', 873, 52, 194, 85, 'Flash', third, 'Replicated To All (if server)'],
  ['event', 52, 160, 127, 70, 'SetDefaultModels', 'Executes On All', 'Custom Event'], ['flow', 333, 183, 111, 88, 'For Each Loop'], ['pure', 484, 214, 136, 48, 'Get Controlled Pawn', 'Target is Controller'], ['cast', 657, 183, 183, 74, 'Cast To ThirdPersonCharacter'], ['func', 873, 160, 221, 82, 'Set Default Model Server', third, 'Replicated To Server (if owning client)'],
  ['event', 52, 280, 119, 66, 'SwitchToNazgul', 'Executes On All', 'Custom Event'], ['var', 180, 345, 88, 18, 'b'], ['flow', 333, 300, 111, 92, 'For Each Loop'], ['pure', 484, 332, 136, 52, 'Get Controlled Pawn', 'Target is Controller'], ['cast', 657, 300, 182, 76, 'Cast To ThirdPersonCharacter'], ['func', 883, 280, 223, 145, 'Switch Model on Server', third, 'Replicated To Server (if owning client)'],
  ['event', 52, 508, 134, 66, 'TeleportServer', 'Executes On Server', 'Custom Event'], ['flow', 214, 528, 82, 74, 'Do Once'], ['func', 397, 528, 71, 54, 'Delay'], ['flow', 592, 528, 112, 92, 'For Each Loop'], ['pure', 754, 561, 136, 48, 'Get Controlled Pawn', 'Target is Controller'], ['cast', 927, 528, 183, 74, 'Cast To ThirdPersonCharacter'], ['flow', 1165, 528, 76, 58, 'Branch'],
  ['func', 1327, 516, 124, 116, 'SetActorLocation', 'Target is Actor'], ['func', 1327, 690, 124, 115, 'SetActorLocation', 'Target is Actor'], ['var', 766, 657, 86, 20, 'r']
], `157,109,w 162,75,r,o 343,102,w 343,119,b 432,102,w 432,119,b 432,135,g,o 432,153,w,o 505,147,b 616,147,b 678,102,w 678,119,b 840,102,w 838,138,b 884,109,w 884,126,b 1056,109,w,o
 166,217,w 171,183,r,o 343,210,w 343,228,b 432,210,w 432,228,b 432,243,g,o 432,261,w,o 495,255,b 606,255,b 667,210,w 667,228,b 828,210,w 828,229,w,o 828,246,b 884,217,w 884,234,b 1084,217,w,o
 157,336,w 162,301,R,o 260,353,b 343,330,w 343,347,b 432,330,w 432,347,b 432,361,g,o 432,379,w,o 495,373,b 606,373,b 667,330,w 667,347,b 828,330,w 828,348,w,o 828,366,b 894,336,w 894,352,b 894,368,b 894,384,b,o 894,399,p,o 894,415,r,o 1094,336,w,o
 175,562,w 181,528,r,o 226,556,w 226,576,w,o 226,592,r,o 284,556,w 406,556,w 409,573,l,o 456,556,w 602,556,w 602,573,b 690,556,w 690,573,b 690,590,g,o 690,606,w,o 766,601,b 876,601,b 936,556,w 936,573,b 1100,556,w 1098,576,w,o 1098,593,b 1176,556,w 1176,573,r 1228,556,w 1228,576,w
 1338,560,w 1338,576,b 1338,592,o,o 1338,607,r,o 1338,624,r,o 1438,560,w,o 1438,576,p,o 1438,592,r,o 1338,732,w 1338,749,b 1338,765,o,o 1338,780,r,o 1338,796,r,o 1438,732,w,o 1438,749,p,o 1438,765,r,o 778,667,b 838,667,r`,
 clock(466, 529) + '<circle cx="852" cy="655" r="5" fill="#fff"/>');

// player login chain
scene(45, 340, [
  ['w', '148 183H199'], ['b', '148 201H199', 7], ['w', '358 183L394 189'], ['b', '356 218L394 207'], ['b', '356 218C640 218 680 88 968 88'], ['b', '1030 88L1096 92'], ['b', '356 218C700 218 860 271 1312 271'], ['b', '612 214H1042', 6], ['b', '976 197H1486', 9], ['w', '594 189L612 183'], ['g', '543 239L612 200'], ['g', '790 208L818 200'],
  ['w', '672 182H816'], ['w', '868 182H1042'], ['w', '1168 182H1236'], ['w', '1352 183L1486 193'], ['w', '1440 190Q1460 176 1480 172', 7], ['b', '1424 271C1450 271 1450 211 1486 211'],
  ['w', '162 330L287 324'], ['m', '228 340H287'], ['w', '162 448L200 441'], ['w', '326 441L394 448'], ['b', '160 466H394', 6], ['b', '145 499C170 499 170 460 200 459', 8], ['b', '145 499L200 474', 7]
], [
  ['event', 27, 154, 132, 56, 'Event OnPostLogin'], ['cast', 190, 154, 178, 76, 'Cast To MainPlayerController'], ['func', 384, 132, 222, 88, 'Init UI', 'Target is Main Player Controller', 'Replicated To Owning Client (if server)'], ['op', 602, 166, 84, 58, ''], ['var', 470, 231, 86, 20, 'g'], ['var', 718, 198, 88, 20, 'g'], ['op', 806, 166, 74, 44, '++'], ['var', 902, 188, 86, 20, 'b'],
  ['arr', 1034, 166, 146, 58, 'ADDUNIQUE'], ['flow', 1225, 154, 139, 60, 'Switch Has Authority'], ['pure', 1302, 232, 134, 49, 'Get Controlled Pawn', 'Target is Controller'], ['var', 958, 78, 84, 20, 'b'], ['flow', 1087, 45, 77, 62, 'Is Valid'],
  ['event', 37, 274, 136, 84, 'PrintOnServer', 'Executes On Server', 'Custom Event'], ['op', 170, 330, 70, 22, ''], ['func', 276, 294, 92, 88, 'Print String'], ['event', 37, 394, 136, 82, 'PickupKey', 'Executes On Server', 'Custom Event'], ['arr', 190, 424, 146, 60, 'ADDUNIQUE'], ['func', 384, 394, 170, 82, 'Hide', 'Target is Interactable Key', 'Replicated To All (if server)'], ['var', 71, 489, 86, 21, 'b']
], `148,183,w 146,201,b 153,164,R,o 199,183,w 199,201,b 358,183,w 358,201,w,o 356,218,b 394,189,w 394,207,b 594,189,w 612,182,w 612,200,g 612,214,b 674,182,w 674,199,g,o 543,239,g 790,208,g 816,182,w 816,200,g 870,182,w 870,199,g,o 976,197,b 1042,182,w 1042,199,b 1042,214,b 1168,182,w 1168,199,g,o 1236,183,w 1352,183,w 1312,271,b 1424,271,b
 968,88,b 1030,88,b 1096,75,w,o 1096,93,b 1154,75,w,o 1154,94,w,o 162,330,w 160,346,m 166,296,R,o 178,340,m 230,340,m 287,324,w 287,340,m 358,324,w,o 162,448,w 160,466,b 166,414,R,o 145,499,b 200,441,w 200,459,b 200,474,b 326,441,w 326,459,g,o 394,448,w 396,466,b 544,448,w,o`,
 '<path d="M278 368l10-15h12l-10 15zM302 368l10-15h12l-10 15zM326 368l10-15h12l-10 15zM348 368l10-15h10l-8 15z" fill="#8a8a10"/><text class="node-title" x="280" y="360">DevelopmentOnly</text><text class="node-title" x="632" y="179">SET</text><circle cx="688" cy="162" r="5" fill="#fff"/><circle cx="1045" cy="75" r="5" fill="#fff"/>');

// delayed retry and model change
scene(535, 340, [
  ['w', '0 172L250 108L440 160'], ['w', '226 75C180 65 170 96 215 97L250 108'], ['w', '278 75C340 65 330 100 270 104'], ['w', '178 212C230 212 190 90 218 82'], ['w', '178 192L447 183'], ['b', '-30 200H662', 6], ['b', '175 229L245 208'], ['r', '302 208L447 201'], ['w', '500 183C560 185 560 202 500 202'],
  ['w', '500 183H662'], ['w', '750 183H986'], ['b', '750 201C780 201 790 238 825 238'], ['b', '936 238C960 238 965 201 986 201'], ['w', '1146 183L1192 189'], ['b', '1146 219L1192 207']
], [
  ['func', 220, 45, 70, 56, 'Delay'], ['cast', 4, 166, 184, 74, 'Cast To ThirdPersonCharacter'], ['var', 234, 199, 82, 18, 'r'], ['flow', 436, 154, 76, 60, 'Branch'], ['flow', 652, 154, 112, 90, 'For Each Loop'], ['pure', 814, 198, 136, 50, 'Get Controlled Pawn', 'Target is Controller'], ['cast', 976, 154, 184, 74, 'Cast To ThirdPersonCharacter'], ['func', 1182, 132, 195, 84, 'Set Default Model Clients', third, 'Replicated To All (if server)']
], `231,75,w 233,92,l,o 278,75,w 15,193,w 15,211,b 175,193,w 175,212,w 175,229,b 243,208,b 304,208,r 447,183,w 447,201,r 500,183,w 500,202,w 662,183,w 662,201,b 750,183,w 750,201,b 750,216,g,o 750,232,w,o 825,238,b 936,238,b 986,183,w 986,201,b 1146,183,w 1146,202,w,o 1146,219,b 1192,189,w 1192,207,b 1366,189,w,o`,
 clock(290, 46));

svg.innerHTML = out;
```
